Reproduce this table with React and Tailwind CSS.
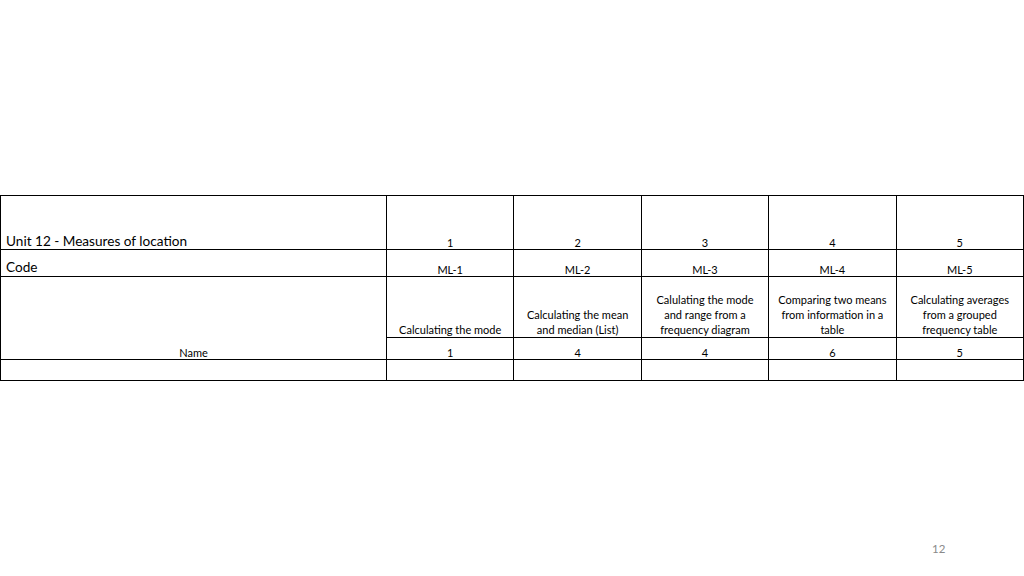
import React from "react";

const nums = ["1", "2", "3", "4", "5"];
const codes = ["ML-1", "ML-2", "ML-3", "ML-4", "ML-5"];
const descs = [
  ["Calculating the mode"],
  ["Calculating the mean", "and median (List)"],
  ["Calulating the mode", "and range from a", "frequency diagram"],
  ["Comparing two means", "from information in a", "table"],
  ["Calculating averages", "from a grouped", "frequency table"],
];
const marks = ["1", "4", "4", "6", "5"];

export default function App() {
  const font = { fontFamily: "Lato, 'Open Sans', 'Liberation Sans', sans-serif" };
  return (
    <div className="flex h-[576px] w-[1024px] flex-col bg-white text-black" style={font}>
      <div className="pt-[195px]">
        <div className="grid w-[1024px] grid-cols-[385px_repeat(5,1fr)] grid-rows-[53px_26px_60px_21px_20px] gap-px border border-black bg-black">
          {/* row 1 */}
          <div className="flex items-end bg-white pb-[0px] pl-[5px] text-[13.6px] leading-[16px]">
            Unit 12 - Measures of location
          </div>
          {nums.map((n) => (
            <div key={n} className="flex items-end justify-center bg-white pb-[0px] text-[11px] leading-[13px]">
              {n}
            </div>
          ))}
          {/* row 2 */}
          <div className="flex items-end bg-white pb-[1px] pl-[5px] text-[13.6px] leading-[16px]">
            Code
          </div>
          {codes.map((c) => (
            <div key={c} className="flex items-end justify-center bg-white pb-[0px] text-[11px] leading-[13px]">
              {c}
            </div>
          ))}
          {/* row 3 */}
          <div className="row-span-2 flex items-end justify-center bg-white pb-[0px] text-[11px] leading-[13px]">
            Name
          </div>
          {descs.map((d, i) => (
            <div key={i} className="flex flex-col items-center justify-end bg-white text-center text-[11px] leading-[15px]">
              {d.map((l) => (
                <div key={l}>{l}</div>
              ))}
            </div>
          ))}
          {/* row 4 */}
          {marks.map((m, i) => (
            <div key={i} className="flex items-end justify-center bg-white pb-[0px] text-[11px] leading-[13px]">
              {m}
            </div>
          ))}
          {/* row 5 */}
          {[0, 1, 2, 3, 4, 5].map((i) => (
            <div key={i} className="bg-white" />
          ))}
        </div>
      </div>
      <div className="mt-auto flex pb-[21px] pl-[932px] text-[11.5px] leading-[13px] text-[#8a8a8a]">12</div>
    </div>
  );
}
